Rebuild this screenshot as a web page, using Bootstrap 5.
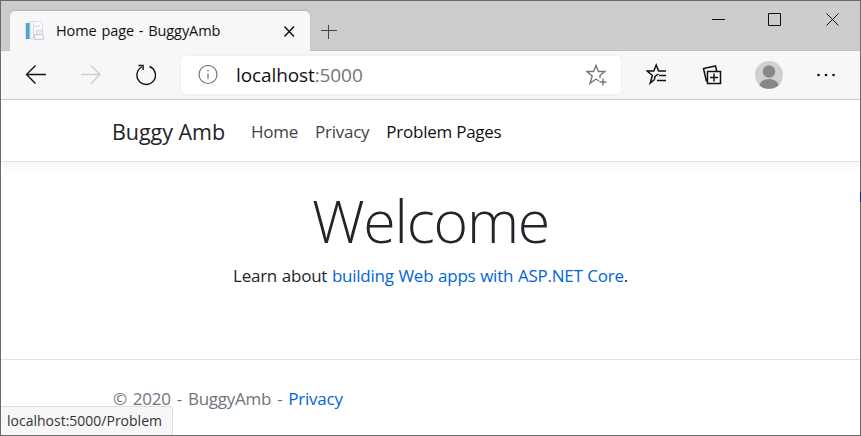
<!DOCTYPE html>
<html lang="en">
<head>
<meta charset="utf-8">
<title>Home page - BuggyAmb</title>
<link href="https://cdn.jsdelivr.net/npm/bootstrap@5.3.0/dist/css/bootstrap.min.css" rel="stylesheet">
<style>
  body { font-family: "Open Sans", "Noto Sans", sans-serif; font-size: 17px; line-height: 26px; color: #212529; }
  a { color: #0366d6; }
  svg { display: block; fill: none; stroke: #111; flex: none; }
  .window { width: 861px; height: 436px; border: 1px solid #6b6b6b; background: #fff; }
  .titlebar { height: 50px; background: #cdcdcd; box-shadow: inset 0 -1px #c1c1c1; padding-left: 9px; }
  .browser-tab { width: 300px; height: 40px; background: #f7f7f7; border-radius: 5px 5px 0 0; box-shadow: 0 -1px 2px #0002; padding: 0 14px; clip-path: inset(-3px -3px 0 -3px); }
  .tab-title { font-size: 14.5px; letter-spacing: -.1px; word-spacing: 1.2px; color: #111; line-height: 20px; margin-left: 10px; }
  .toolbar { height: 49px; background: #f7f7f7; border-bottom: 1px solid #cdcdcd; padding-left: 24px; }
  .address { width: 440px; height: 38px; margin-left: 25px; background: #fff; border-radius: 5px; box-shadow: 0 0 4px #0000000d; padding: 0 13px 0 17px; }
  .url { font-size: 19px; letter-spacing: -.1px; color: #111; margin-left: 18px; }
  .url span { color: #757575; }
  .site-nav { height: 62px; border-bottom: 1px solid #dee2e6; box-shadow: 0 4px 13px #0000000d; padding: 2px 0 0 111px; }
  .site-nav .navbar-brand { font-size: 21.5px; letter-spacing: -.05px; color: #212529; margin-right: 26px; }
  .site-nav .navbar-nav { gap: 17px; }
  .site-nav .nav-link { color: #404346; letter-spacing: -.25px; }
  .site-nav .nav-link.active { color: #111; }
  .site-main { height: 197px; padding-top: 21px; }
  .site-main h1 { font-size: 59px; line-height: 74px; font-weight: 300; letter-spacing: -1.2px; margin: 0 0 6px; }
  .site-main p { letter-spacing: -.25px; word-spacing: .6px; }
  .site-footer { height: 76px; border-top: 1px solid #dee2e6; padding: 26px 0 0 112px; color: #6c757d; letter-spacing: -.25px; word-spacing: 1.8px; }
  .status { left: -1px; bottom: 0; width: 173px; height: 29px; background: #f7f7f7; border: 1px solid #dcdcdc; border-left: 0; border-bottom: 0; border-top-right-radius: 4px; padding: 0 0 0 7px; font-size: 14px; line-height: 27px; color: #333; }
  .edge-dot { right: 0; top: 192px; width: 1px; height: 10px; background: #002b83; }
</style>
<script src="https://cdn.jsdelivr.net/npm/bootstrap@5.3.0/dist/js/bootstrap.bundle.min.js"></script>
</head>
<body class="overflow-hidden">
<div class="window position-relative overflow-hidden">
  <div class="titlebar d-flex">
    <div class="browser-tab d-flex align-items-center align-self-end">
      <svg width="22" height="22" viewBox="0 0 22 22" stroke="none"><path d="M5.500 1.500h10l3 3v14h-13z" fill="#f8f9fb" stroke="#dde1e7"/><path d="M2 3h3.500v16H2z" fill="#4da3d4" stroke="none"/><path d="M1.500 2.500v17M6.500 2.500v17" stroke="#d3e3ed"/><path d="M9.500 3v15M9 6h7" stroke="#d0d7e4"/><path d="M12.500 14v-3.500h6v3.500M10.500 14.500h9v5h-9z" fill="#edf0f5" stroke="#ccd0d8"/><path d="M12 17h6" stroke="#fff"/></svg>
      <span class="tab-title me-auto">Home page - BuggyAmb</span>
      <svg width="14" height="14" viewBox="0 0 14 14" stroke-width="1.500"><path d="M2.500 2.500l9.500 10M12 2.500l-9.500 10"/></svg>
    </div>
    <svg class="mt-4" width="32" height="16" viewBox="0 1 32 16"><path d="M11 6.500h16M18.500-1v16" style="stroke:#444"/></svg>
    <svg class="ms-auto" width="150" height="40" viewBox="710 1 150 40"><path d="M712 19.500h13M768.500 13.500h12v12h-12zM826.500 13.500l12 12M838.500 13.500l-12 12"/></svg>
  </div>
  <div class="toolbar d-flex align-items-center">
    <svg width="131" height="40" viewBox="25 55 131 40" stroke-width="1.400"><path d="M46 74.500H27M35.500 65.500l-9 9 9 9"/><path d="M81 74.500h19M91 65.500l9 9-9 9" style="stroke:#cfcfcf"/><path d="M149.500 66.500A9.300 9.300 0 1 1 141.800 67M138.500 65.500h4.600v4.600"/></svg>
    <div class="address d-flex align-items-center">
      <svg width="20" height="20" viewBox="0 0 20 20" style="stroke:#757575" stroke-width="1.200"><circle cx="10" cy="9.500" r="9"/><path d="M10 8.500v5.500M10 5v1.600"/></svg>
      <div class="url">localhost<span>:5000</span></div>
      <svg class="ms-auto" width="22" height="22" viewBox="586 63 22 22" style="stroke:#777" stroke-width="1.400"><path d="M599 80l-3-2-6 4.500 2.200-7.500-5.400-4.500h6.800l2.400-6 2.400 6h6.400l-5 4.300.5 2.200M603 77.500v7M599.500 81h7"/></svg>
    </div>
    <svg class="ms-auto" width="214" height="40" viewBox="646 55 214 40" stroke-width="1.500"><path d="M654.500 79.500l-4.300 3.600 2.200-7.600-5.200-4.500h6.600l2.400-6 2.400 6h7.400M654.500 79.500l.5-3 3.500-2.500M659 75.500h7M657 80.500h9"/><path d="M707.500 71.500h13v12h-13zM714 73.500v8M710 77.500h8M706.500 81.500l-3-13 12-2.500 1.200 5"/><circle cx="769" cy="75" r="14" fill="#d2d0ce" stroke="none"/><circle cx="769" cy="71.500" r="6.200" fill="#8a8886" stroke="none"/><path d="M759.300 85c3-8 16.400-8 19.400 0-4 5-15.400 5-19.400 0z" fill="#8a8886" stroke="none"/><g fill="#111" stroke="none"><circle cx="818.500" cy="75" r="1.300"/><circle cx="826" cy="75" r="1.300"/><circle cx="833.500" cy="75" r="1.300"/></g></svg>
  </div>
  <nav class="site-nav navbar navbar-expand justify-content-start">
    <a class="navbar-brand" href="#">Buggy Amb</a>
    <div class="navbar-nav"><a class="nav-link px-0" href="#">Home</a><a class="nav-link px-0" href="#">Privacy</a><a class="nav-link active px-0" href="#">Problem Pages</a></div>
  </nav>
  <main class="site-main text-center">
    <h1>Welcome</h1>
    <p class="m-0">Learn about <a class="text-decoration-none" href="#">building Web apps with ASP.NET Core</a>.</p>
  </main>
  <footer class="site-footer">© 2020 - BuggyAmb - <a class="text-decoration-none" href="#">Privacy</a></footer>
  <div class="status position-absolute">localhost:5000/Problem</div>
</div>
<div class="edge-dot position-absolute"></div>
</body>
</html>
